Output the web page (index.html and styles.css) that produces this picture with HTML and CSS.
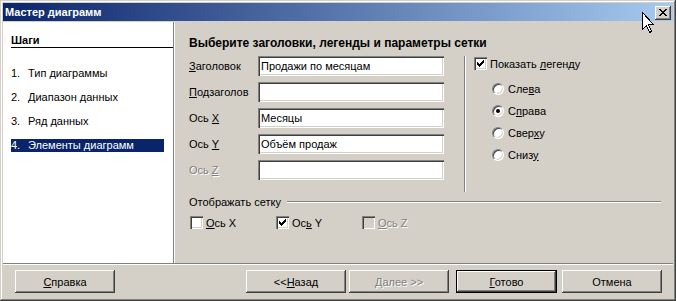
FILE: index.html
```html
<!DOCTYPE html>
<html lang="ru">
<head>
    <meta charset="UTF-8">
    <title>Мастер диаграмм</title>
    <link rel="stylesheet" href="styles.css">
</head>
<body>

    <div class="window">
        <!-- заголовок окна -->
        <div class="titlebar">
            <span class="title">Мастер диаграмм</span>
            <button class="close-btn">
                <svg width="8" height="7" viewBox="0 0 8 7" shape-rendering="crispEdges">
                    <path d="M0 0h2v1h-2zM6 0h2v1h-2zM1 1h2v1h-2zM5 1h2v1h-2zM2 2h4v1h-4zM3 3h2v1h-2zM2 4h4v1h-4zM1 5h2v1h-2zM5 5h2v1h-2zM0 6h2v1h-2zM6 6h2v1h-2z" fill="#000"/>
                </svg>
            </button>
        </div>

        <div class="main">
            <!-- шаги -->
            <div class="steps">
                <div class="steps-head">Шаги</div>
                <ul class="step-list">
                    <li><span class="num">1.</span>Тип диаграммы</li>
                    <li><span class="num">2.</span>Диапазон данных</li>
                    <li><span class="num">3.</span>Ряд данных</li>
                    <li class="current"><span class="num">4.</span>Элементы диаграмм</li>
                </ul>
            </div>

            <div class="pane">
                <div class="pane-title">Выберите заголовки, легенды и параметры сетки</div>

                <div class="pane-top">
                    <div class="fields">
                        <div class="field">
                            <label><u>З</u>аголовок</label>
                            <div class="text-field">Продажи по месяцам</div>
                        </div>
                        <div class="field">
                            <label><u>П</u>одзаголов</label>
                            <div class="text-field"></div>
                        </div>
                        <div class="field">
                            <label>Ось <u>X</u></label>
                            <div class="text-field">Месяцы</div>
                        </div>
                        <div class="field">
                            <label>Ось <u>Y</u></label>
                            <div class="text-field">Объём продаж</div>
                        </div>
                        <div class="field disabled">
                            <label>Ось <u>Z</u></label>
                            <div class="text-field"></div>
                        </div>
                    </div>

                    <div class="legend">
                        <div class="check">
                            <span class="box"><svg width="13" height="13" shape-rendering="crispEdges"><path d="M3 5h1v3h-1zM4 6h1v3h-1zM5 7h1v3h-1zM6 6h1v3h-1zM7 5h1v3h-1zM8 4h1v3h-1zM9 3h1v3h-1z" fill="#000"/></svg></span>
                            <span>Показать <u>л</u>егенду</span>
                        </div>
                        <div class="radios">
                            <div class="radio"><span class="dot"></span><span>Сле<u>в</u>а</span></div>
                            <div class="radio on"><span class="dot"></span><span>С<u>п</u>рава</span></div>
                            <div class="radio"><span class="dot"></span><span>Свер<u>х</u>у</span></div>
                            <div class="radio"><span class="dot"></span><span>Сниз<u>у</u></span></div>
                        </div>
                    </div>
                </div>

                <div class="grid-group">
                    <div class="group-title">
                        <span>Отображать сетку</span>
                        <span class="groove"></span>
                    </div>
                    <div class="grid-checks">
                        <div class="check">
                            <span class="box"></span>
                            <span><u>О</u>сь X</span>
                        </div>
                        <div class="check">
                            <span class="box"><svg width="13" height="13" shape-rendering="crispEdges"><path d="M3 5h1v3h-1zM4 6h1v3h-1zM5 7h1v3h-1zM6 6h1v3h-1zM7 5h1v3h-1zM8 4h1v3h-1zM9 3h1v3h-1z" fill="#000"/></svg></span>
                            <span>Ос<u>ь</u> Y</span>
                        </div>
                        <div class="check disabled">
                            <span class="box"></span>
                            <span><u>О</u>сь Z</span>
                        </div>
                    </div>
                </div>
            </div>
        </div>

        <!-- кнопки -->
        <div class="footer">
            <button class="btn"><u>С</u>правка</button>
            <div class="footer-right">
                <button class="btn">&lt;&lt;<u>Н</u>азад</button>
                <button class="btn disabled"><u>Д</u>алее &gt;&gt;</button>
                <button class="btn default"><u>Г</u>отово</button>
                <button class="btn">Отмена</button>
            </div>
        </div>

        <!-- курсор мыши -->
        <svg class="cursor" width="13" height="21" viewBox="0 0 13 21" shape-rendering="crispEdges">
            <path d="M0.5 0.5V17.5L4.5 13.5L7.5 20.5L9.5 19.5L6.5 12.5H11.5Z" fill="#fff" stroke="#000" stroke-width="1"/>
        </svg>
    </div>

</body>
</html>
```

FILE: styles.css
```css
body {
    margin: 0;
    background-color: #d4d0c8;
    font-family: "Liberation Sans", Arial, sans-serif;
    font-size: 11px;
    color: #000;
}

u {
    text-decoration: underline;
    text-underline-offset: 1px;
}

.window {
    position: relative;
    width: 676px;
    height: 301px;
    box-sizing: border-box;
    padding: 3px;
    background-color: #d4d0c8;
    box-shadow: inset -1px -1px #404040, inset 1px 1px #d4d0c8,
                inset -2px -2px #808080, inset 2px 2px #fff;
    display: flex;
    flex-direction: column;
}

/* заголовок */
.titlebar {
    height: 18px;
    flex: none;
    display: flex;
    align-items: center;
    justify-content: space-between;
    padding: 0 2px 0 1px;
    background: linear-gradient(to right, #0a246a, #a6caf0);
    margin-bottom: 1px;
}

.title {
    color: #fff;
    font-weight: bold;
    font-size: 11px;
    padding-left: 1px;
}

.close-btn {
    width: 16px;
    height: 14px;
    padding: 0;
    border: none;
    background-color: #d4d0c8;
    box-shadow: inset -1px -1px #404040, inset 1px 1px #fff,
                inset -2px -2px #808080;
    display: flex;
    align-items: center;
    justify-content: center;
    margin-top: 1px;
}

.close-btn svg {
    margin-left: -1px;
}

/* основная часть */
.main {
    height: 241px;
    flex: none;
    display: flex;
    border-bottom: 1px solid #808080;
    box-shadow: 0 1px #fff;
    margin-bottom: 1px;
}

.steps {
    width: 170px;
    flex: none;
    background-color: #fff;
    border-right: 1px solid #808080;
    box-shadow: 1px 0 #fff;
    padding-top: 12px;
}

.steps-head {
    margin-left: 8px;
    font-weight: bold;
    border-bottom: 1px solid #000;
    line-height: 13px;
}

.step-list {
    list-style: none;
    margin: 0;
    padding: 0 8px;
}

.step-list li {
    margin-top: 11px;
    height: 13px;
    line-height: 13px;
}

.step-list li:first-child {
    margin-top: 19px;
}

.step-list .num {
    display: inline-block;
    width: 17px;
}

.step-list li.current {
    background-color: #0a246a;
    color: #fff;
    width: 153px;
}

.pane {
    flex: 1;
    padding: 14px 0 0 15px;
}

.pane-title {
    font-weight: bold;
    font-size: 12px;
    line-height: 14px;
}

.pane-top {
    display: flex;
    margin-top: 6px;
}

.fields {
    display: flex;
    flex-direction: column;
    gap: 6px;
}

.field {
    display: flex;
    align-items: center;
}

.field label {
    width: 69px;
}

.text-field {
    width: 186px;
    height: 20px;
    box-sizing: border-box;
    padding: 0 3px;
    line-height: 20px;
    background-color: #fff;
    box-shadow: inset 1px 1px #808080, inset 2px 2px #404040,
                inset -1px -1px #fff, inset -2px -2px #d4d0c8;
}

.field.disabled label,
.check.disabled,
.btn.disabled {
    color: #808080;
    text-shadow: 1px 1px #fff;
}

.legend {
    margin-left: 20px;
    height: 136px;
    box-sizing: border-box;
    border-left: 1px solid #808080;
    box-shadow: inset 1px 0 #fff;
    padding-left: 9px;
    padding-top: 1px;
}

.check {
    display: flex;
    align-items: center;
    gap: 3px;
    height: 13px;
}

.box {
    width: 13px;
    height: 13px;
    flex: none;
    background-color: #fff;
    box-shadow: inset 1px 1px #808080, inset 2px 2px #404040,
                inset -1px -1px #fff, inset -2px -2px #d4d0c8;
}

.box svg {
    display: block;
}

.check.disabled .box {
    background-color: #d4d0c8;
}

.radios {
    padding-left: 18px;
    margin-top: 12px;
    display: flex;
    flex-direction: column;
    gap: 9px;
}

.radio {
    display: flex;
    align-items: center;
    gap: 4px;
    height: 13px;
}

.dot {
    width: 12px;
    height: 12px;
    box-sizing: border-box;
    border-radius: 50%;
    background-color: #fff;
    border: 1px solid;
    border-color: #808080 #fff #fff #808080;
    box-shadow: inset 1px 1px #404040, inset -1px -1px #d4d0c8;
    display: flex;
    align-items: center;
    justify-content: center;
}

.radio.on .dot::after {
    content: "";
    width: 4px;
    height: 4px;
    border-radius: 50%;
    background-color: #000;
}

.grid-group {
    margin-top: 3px;
    padding-right: 12px;
}

.group-title {
    display: flex;
    align-items: center;
    gap: 6px;
    height: 13px;
}

.groove {
    flex: 1;
    height: 1px;
    background-color: #808080;
    box-shadow: 0 1px #fff;
}

.grid-checks {
    display: flex;
    margin-top: 8px;
    padding-left: 1px;
}

.grid-checks .check {
    width: 86px;
}

/* кнопки */
.footer {
    flex: 1;
    display: flex;
    justify-content: space-between;
    align-items: flex-start;
    padding: 5px 11px 0 12px;
}

.footer-right {
    display: flex;
    gap: 3px;
}

.btn {
    width: 100px;
    height: 23px;
    padding: 0;
    border: none;
    background-color: #d4d0c8;
    font-family: "Liberation Sans", Arial, sans-serif;
    font-size: 11px;
    color: #000;
    box-shadow: inset -1px -1px #404040, inset 1px 1px #fff,
                inset -2px -2px #808080;
}

.btn.default {
    margin-left: 4px;
    margin-right: 2px;
    width: 101px;
    box-shadow: inset 0 0 0 1px #000, inset -2px -2px #404040,
                inset 2px 2px #fff, inset -3px -3px #808080;
}

.cursor {
    position: absolute;
    left: 642px;
    top: 12px;
}
```
